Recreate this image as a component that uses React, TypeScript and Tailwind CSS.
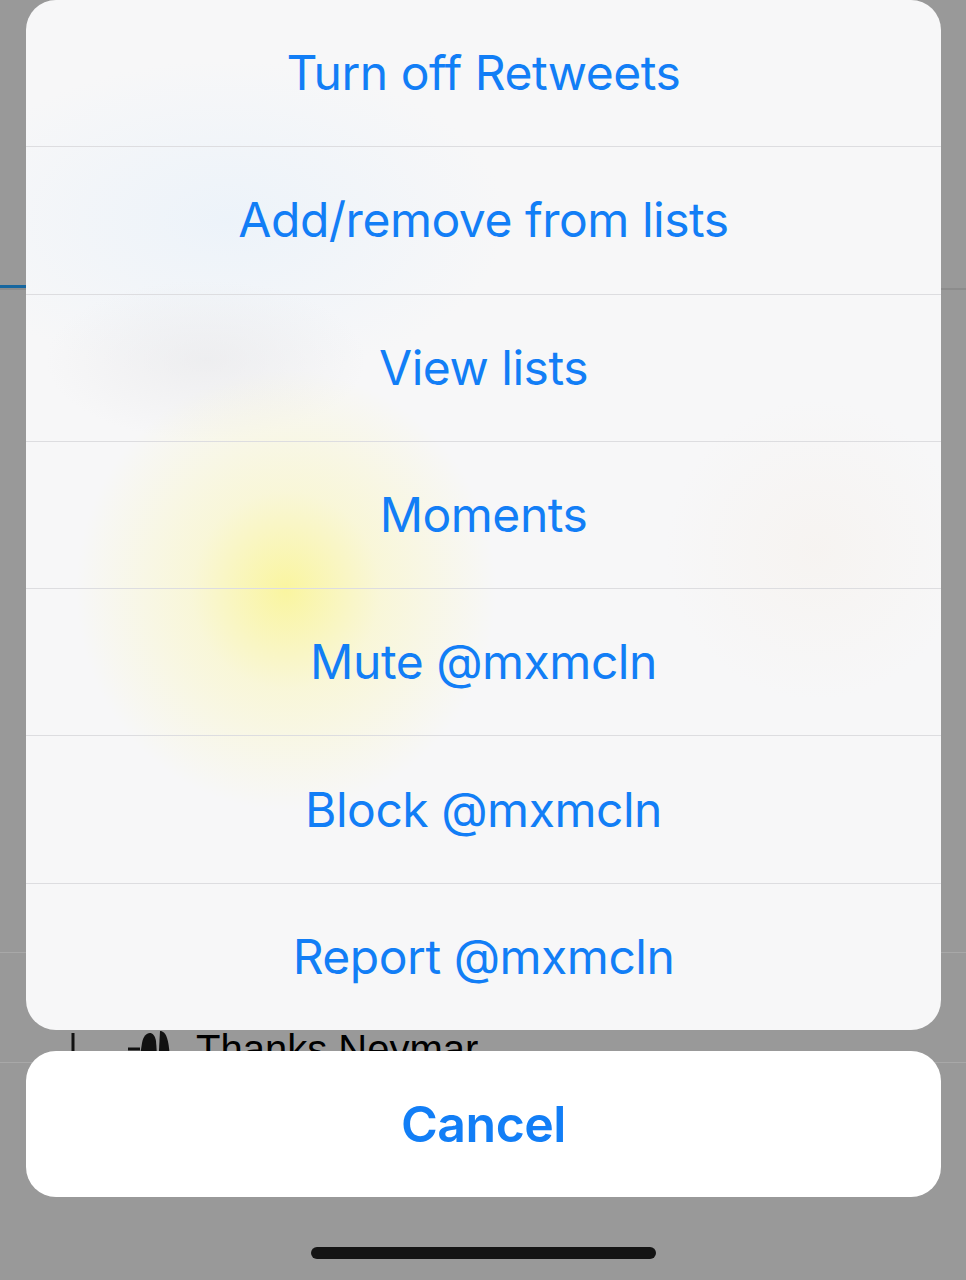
import React from 'react';

const actions = [
  'Turn off Retweets',
  'Add/remove from lists',
  'View lists',
  'Moments',
  'Mute @mxmcln',
  'Block @mxmcln',
  'Report @mxmcln',
];

function Timeline() {
  return (
    <div className="flex flex-col">
      <div className="h-[285px]" />
      <div className="flex border-b-2 border-[#8c8c8c]">
        <div className="w-[180px] h-[3px] bg-[#17679f]" />
      </div>
      <div className="h-[663px] border-b border-[#a8a8a8]" />
      <div className="h-[110px] border-b border-[#a8a8a8] flex items-start pt-[76px] pl-[70px] gap-[24px]">
        <svg width="34" height="40" viewBox="0 0 34 40" className="mt-[4px]">
          <path d="M3 0 V26 H30" fill="none" stroke="#111" strokeWidth="3" />
          <path d="M24 20 L31 26 L24 32" fill="none" stroke="#111" strokeWidth="3" />
        </svg>
        <svg width="44" height="40" viewBox="0 0 44 40">
          <path d="M0 20 H12" stroke="#111" strokeWidth="3" />
          <path d="M14 14 C16 2 26 0 28 12 L30 40 H10 Z" fill="#111" />
          <path d="M32 2 C38 2 42 10 42 40 H30 Z" fill="#111" />
        </svg>
        <span className="text-[40px] leading-none text-black font-['Liberation_Sans',sans-serif]">
          Thanks Neymar
        </span>
      </div>
    </div>
  );
}

function ActionSheet() {
  return (
    <div className="absolute inset-0 flex flex-col px-[26px] pr-[25px]">
      <div className="relative h-[1030px] rounded-[30px] bg-[#f7f7f8] overflow-hidden flex flex-col">
        {/* blurred stuff behind the sheet */}
        <div className="absolute left-[-80px] top-[60px] w-[560px] h-[320px] bg-[radial-gradient(closest-side,rgba(234,242,250,0.8),rgba(234,242,250,0))]" />
        <div className="absolute left-[20px] top-[280px] w-[320px] h-[160px] bg-[radial-gradient(closest-side,rgba(234,234,236,0.7),rgba(234,234,236,0))]" />
        <div className="absolute left-[50px] top-[370px] w-[420px] h-[440px] bg-[radial-gradient(closest-side,rgba(250,245,155,0.95),rgba(250,246,190,0.55)_45%,rgba(250,248,225,0))]" />
        <div className="absolute left-[640px] top-[400px] w-[300px] h-[300px] bg-[radial-gradient(closest-side,rgba(246,242,238,0.7),rgba(246,242,238,0))]" />
        {actions.map((label, i) => (
          <div
            key={label}
            className={
              'relative flex-1 flex items-center justify-center text-[48px] tracking-[-0.01em] text-[#127ef6] font-[Inter,sans-serif] ' +
              (i > 0 ? 'border-t border-[#dddde0]' : '')
            }
          >
            {label}
          </div>
        ))}
      </div>
      <div className="mt-[21px] h-[146px] rounded-[30px] bg-white flex items-center justify-center text-[50px] font-semibold tracking-[-0.01em] text-[#127ef6] font-[Inter,sans-serif]">
        Cancel
      </div>
      <div className="flex justify-center mt-[50px]">
        <div className="w-[345px] h-[12px] rounded-full bg-[#141414]" />
      </div>
    </div>
  );
}

export default function App() {
  return (
    <div className="relative w-[966px] h-[1280px] bg-[#999999] overflow-hidden">
      <Timeline />
      <ActionSheet />
    </div>
  );
}
